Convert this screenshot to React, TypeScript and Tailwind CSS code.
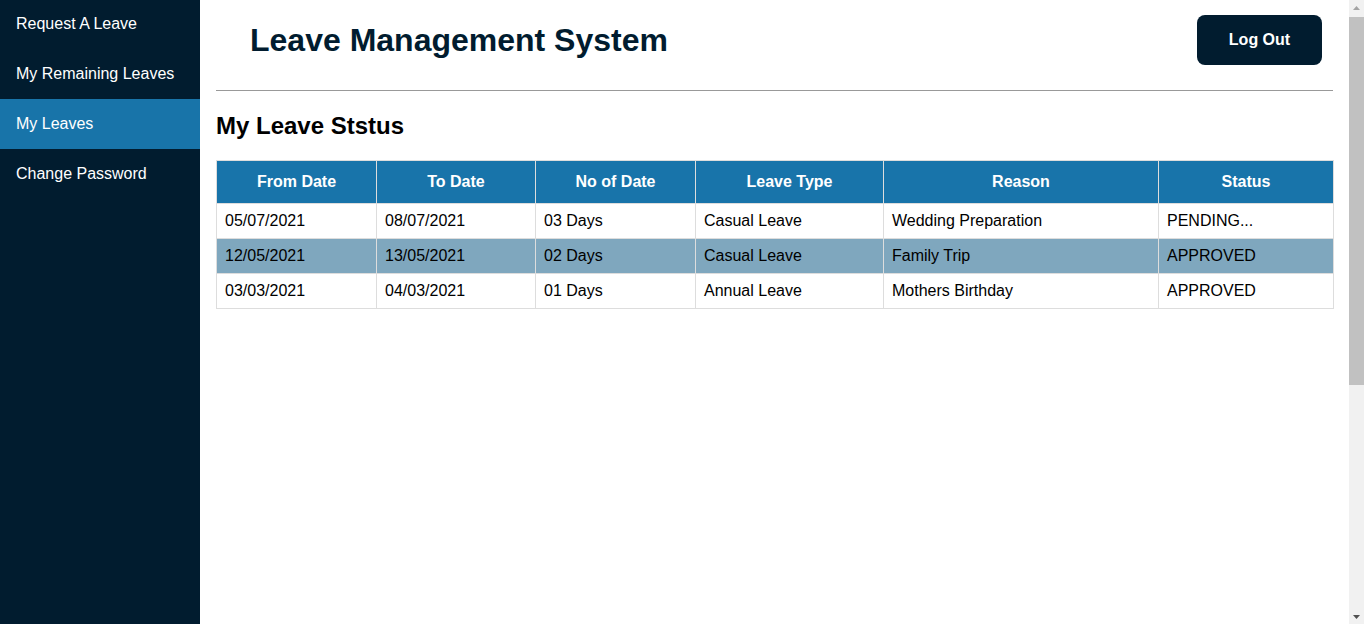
import React from "react";

const rows = [
  ["05/07/2021", "08/07/2021", "03 Days", "Casual Leave", "Wedding Preparation", "PENDING..."],
  ["12/05/2021", "13/05/2021", "02 Days", "Casual Leave", "Family Trip", "APPROVED"],
  ["03/03/2021", "04/03/2021", "01 Days", "Annual Leave", "Mothers Birthday", "APPROVED"],
];

const headers = [
  { t: "From Date", w: "w-[160px]" },
  { t: "To Date", w: "w-[159px]" },
  { t: "No of Date", w: "w-[160px]" },
  { t: "Leave Type", w: "w-[188px]" },
  { t: "Reason", w: "w-[275px]" },
  { t: "Status", w: "w-[175px]" },
];

const navItems = ["Request A Leave", "My Remaining Leaves", "My Leaves", "Change Password"];

export default function App() {
  return (
    <div
      className="flex h-screen overflow-hidden bg-white"
      style={{ fontFamily: '"Liberation Sans", Arial, sans-serif' }}
    >
      <nav className="w-[200px] shrink-0 bg-[#011c2f]">
        {navItems.map((t, i) => (
          <div
            key={t}
            className={`${i === 0 ? "h-[49px]" : "h-[50px]"} flex items-center px-4 text-[16px] text-white ${
              t === "My Leaves" ? "bg-[#1874a9]" : ""
            }`}
          >
            <span className={i === 0 ? "-mt-[1px]" : "mt-0"}>{t}</span>
          </div>
        ))}
      </nav>
      <main className="flex-1 min-w-0 px-4">
        <header className="flex items-center justify-between h-[91px] border-b border-[#999] pb-[11px]">
          <h1 className="pl-[34px] text-[32px] font-bold text-[#011c2f] leading-none">
            Leave Management System
          </h1>
          <button className="mr-[11px] w-[125px] h-[50px] rounded-[8px] bg-[#011c2f] text-white font-bold text-[16px]">
            Log Out
          </button>
        </header>
        <h2 className="mt-[21px] text-[24px] font-bold text-black leading-[28px]">My Leave Ststus</h2>
        <table className="mt-[20px] w-full table-fixed border-collapse text-[16px]">
          <thead>
            <tr className="bg-[#1874aa] text-white">
              {headers.map((h) => (
                <th
                  key={h.t}
                  className={`${h.w} h-[43px] border border-[#ddd] font-bold text-center`}
                >
                  {h.t}
                </th>
              ))}
            </tr>
          </thead>
          <tbody>
            {rows.map((r, i) => (
              <tr key={i} className={i === 1 ? "bg-[#7fa7be]" : "bg-white"}>
                {r.map((c, j) => (
                  <td key={j} className="h-[35px] border border-[#ddd] px-2 text-black">
                    {c}
                  </td>
                ))}
              </tr>
            ))}
          </tbody>
        </table>
      </main>
      <div className="w-[15px] shrink-0 bg-[#f1f1f1] flex flex-col items-center">
        <div className="h-[15px] flex items-center justify-center">
          <svg width="7" height="4" viewBox="0 0 7 4">
            <path d="M3.5 0 L7 4 L0 4 Z" fill="#a3a3a3" />
          </svg>
        </div>
        <div className="mt-[2px] h-[368px] w-[15px] bg-[#c1c1c1]" />
        <div className="flex-1" />
        <div className="h-[15px] flex items-center justify-center">
          <svg width="7" height="4" viewBox="0 0 7 4">
            <path d="M0 0 L7 0 L3.5 4 Z" fill="#505050" />
          </svg>
        </div>
      </div>
    </div>
  );
}
